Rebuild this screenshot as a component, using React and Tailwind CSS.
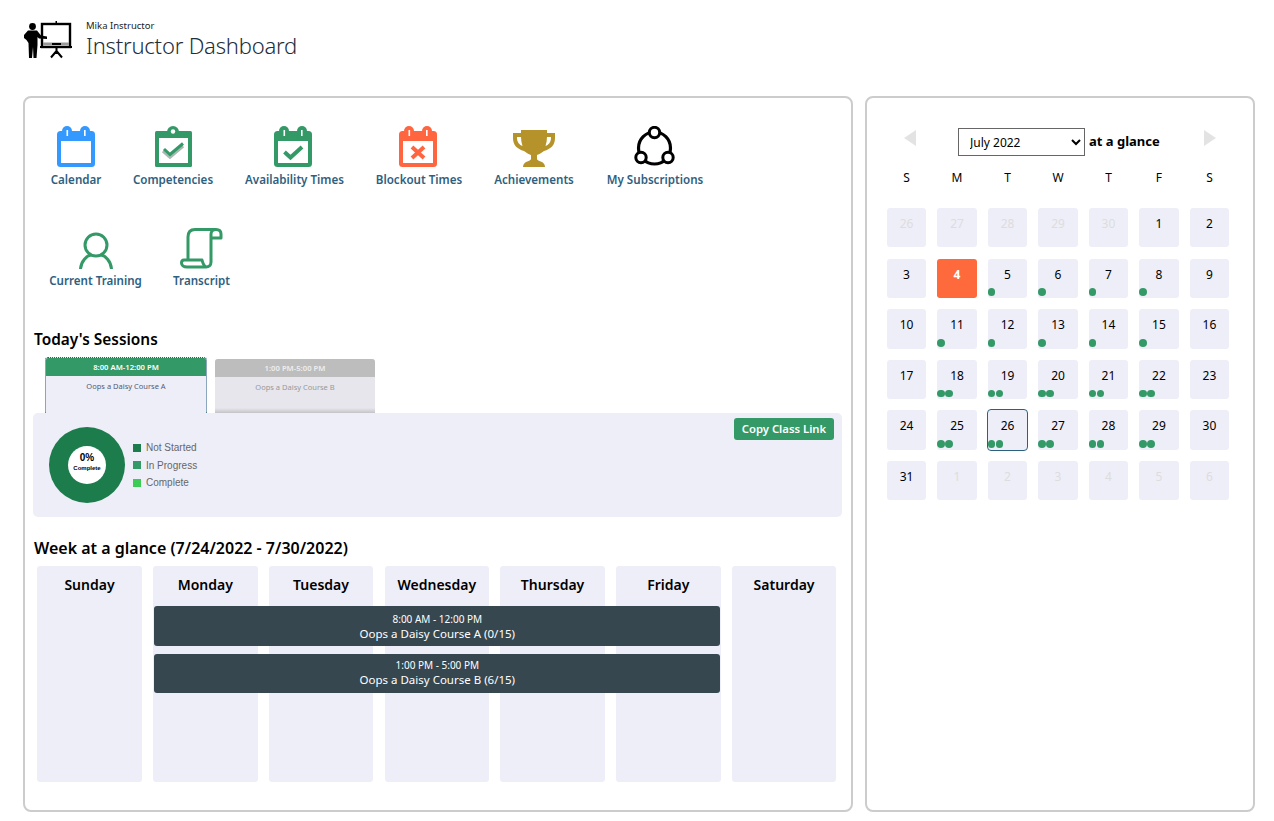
import React from "react";

const G = "#339966";
const O = "#ff6640";
const B = "#3399ff";

function Cal({ color, children, cls }) {
  return (
    <svg width="38" height="41" viewBox="0 0 38 41" className={cls}>
      <rect x="0" y="5" width="38" height="36" rx="3.5" fill={color} />
      <rect x="5" y="0" width="10" height="12" rx="5" fill={color} />
      <rect x="23" y="0" width="10" height="12" rx="5" fill={color} />
      <rect x="9.5" y="4" width="1.6" height="6" fill="#fff" />
      <rect x="27" y="4" width="1.6" height="6" fill="#fff" />
      <rect x="4" y="15" width="30" height="22" fill="#fff" />
      {children}
    </svg>
  );
}

const CalendarIcon = () => <Cal color={B} />;
const AvailIcon = () => (
  <Cal color={G} cls="mr-[3px]">
    <path d="M10.5 26 L16.5 31.5 L28 21" fill="none" stroke={G} strokeWidth="4" />
  </Cal>
);
const BlockIcon = () => (
  <Cal color={O} cls="mr-[3px]">
    <path d="M13 21 L25 32 M25 21 L13 32" fill="none" stroke={O} strokeWidth="4" />
  </Cal>
);

const ClipIcon = () => (
  <svg width="37" height="41" viewBox="0 0 37 41">
    <rect x="0" y="5" width="37" height="36" rx="1.5" fill={G} />
    <circle cx="18" cy="6" r="6" fill={G} />
    <circle cx="18" cy="5.5" r="2.2" fill="#fff" />
    <rect x="4" y="12" width="29" height="25" fill="#fff" />
    <path d="M8 25 L15 31 L28 20" fill="none" stroke="#a9b8b0" strokeWidth="3.5" />
    <path d="M9 23 L15 28.5 L28 17.5" fill="none" stroke={G} strokeWidth="3" />
  </svg>
);

const TrophyIcon = () => (
  <svg width="42" height="37" viewBox="0 0 42 37">
    <path
      d="M8 0 H34 V3 H42 V8 C42 15 38 19 31 21 C28 23.5 25.5 24.5 24 25 V29 C24 30 26 31 29 32 C31 33 32 35 32 37 H10 C10 35 11 33 13 32 C16 31 18 30 18 29 V25 C16.5 24.5 14 23.5 11 21 C4 19 0 15 0 8 V3 H8 Z M4 7 V8 C4 12 6.5 15 9.5 16 C8.5 13 8 10 8 7 Z M38 7 H34 C34 10 33.5 13 32.5 16 C35.5 15 38 12 38 8 Z"
      fill="#b5932a"
      fillRule="evenodd"
    />
  </svg>
);

const SubsIcon = () => (
  <svg width="41" height="41" viewBox="0 0 41 41" className="mr-[2px]">
    <circle cx="20.5" cy="22" r="16" fill="none" stroke="#000" strokeWidth="3.2" />
    <circle cx="20.5" cy="6.5" r="5.2" fill="#fff" stroke="#000" strokeWidth="3" />
    <circle cx="7" cy="31.5" r="5.2" fill="#fff" stroke="#000" strokeWidth="3" />
    <circle cx="34" cy="31.5" r="5.2" fill="#fff" stroke="#000" strokeWidth="3" />
  </svg>
);

const PersonIcon = () => (
  <svg width="34" height="37" viewBox="0 0 34 37">
    <circle cx="17" cy="13" r="11" fill="none" stroke={G} strokeWidth="3" />
    <path d="M1.5 37 C2 29 8 23.5 12 23 M32.5 37 C32 29 26 23.5 22 23" fill="none" stroke={G} strokeWidth="3" />
  </svg>
);

const ScrollIcon = () => (
  <svg width="43" height="41" viewBox="0 0 43 41">
    <path
      d="M8 31 V9 C8 4 10 1.5 15 1.5 H36 C39.5 1.5 41 3.5 41 6 V10 H31 M31 10 V6 C31 3.5 33 1.5 36 1.5 M31 10 V34 C31 37 29 39 26 39 H7 C3.5 39 1.5 37 1.5 35 C1.5 33 2.5 32 4 32 H22 C23 36 24 38 26 39"
      fill="none"
      stroke={G}
      strokeWidth="3"
      strokeLinejoin="round"
    />
  </svg>
);

const Logo = () => (
  <svg width="50" height="40" viewBox="0 0 50 40" className="mt-[1px]">
    <rect x="19" y="5" width="28" height="23" fill="#fff" stroke="#000" strokeWidth="2.4" />
    <rect x="32.5" y="2" width="1.5" height="3" fill="#000" />
    <rect x="20" y="23.5" width="26" height="3" fill="#999" />
    <rect x="29" y="24" width="9" height="2" fill="#000" />
    <rect x="17" y="27" width="32" height="2" fill="#000" />
    <path d="M33.5 29 V35 M33.5 32 L28 38.5 M33.5 32 L39 38.5" fill="none" stroke="#000" strokeWidth="2" />
    <circle cx="9.5" cy="7.5" r="3.4" fill="#000" />
    <path d="M5 11.5 H14 L18 16.5 L24 17.5 V20 L16 19.5 L14.5 18 V26 L13.5 39 H10.5 L10 28 L9 39 H6 L5.5 24 L3.5 21 L1 19 V16 Z" fill="#000" />
  </svg>
);

const items1 = [
  ["Calendar", 50, <CalendarIcon />],
  ["Competencies", 79, <ClipIcon />],
  ["Availability Times", 99, <AvailIcon />],
  ["Blockout Times", 85, <BlockIcon />],
  ["Achievements", 80, <TrophyIcon />],
  ["My Subscriptions", 97, <SubsIcon />],
];
const items2 = [
  ["Current Training", 91, <PersonIcon />],
  ["Transcript", 55, <ScrollIcon />],
];

function IconItem({ label, w, icon, mt }) {
  return (
    <div className="flex flex-col items-center" style={{ width: w }}>
      <div className="h-[41px] flex items-end">{icon}</div>
      <div className={`${mt} h-[16px] leading-[16px] text-[11.6px] font-semibold text-[#2f5f80] whitespace-nowrap`}>{label}</div>
    </div>
  );
}

const cal = [
  [26, 0, 1], [27, 0, 1], [28, 0, 1], [29, 0, 1], [30, 0, 1], [1, 0], [2, 0],
  [3, 0], [4, 0, 0, "today"], [5, 1], [6, 1], [7, 1], [8, 1], [9, 0],
  [10, 0], [11, 1], [12, 1], [13, 1], [14, 1], [15, 1], [16, 0],
  [17, 0], [18, 2], [19, 2], [20, 2], [21, 2], [22, 2], [23, 0],
  [24, 0], [25, 2], [26, 2, 0, "sel"], [27, 2], [28, 2], [29, 2], [30, 0],
  [31, 0], [1, 0, 1], [2, 0, 1], [3, 0, 1], [4, 0, 1], [5, 0, 1], [6, 0, 1],
];

function Day({ d }) {
  const [n, dots, off, kind] = d;
  const bg = kind === "today" ? "bg-[#ff6a3d] text-white font-bold" : off ? "bg-[#eeeef8] text-[#dddddd]" : "bg-[#eeeef8] text-black";
  const ring = kind === "sel" ? "outline outline-1 outline-[#2a6080]" : "";
  return (
    <div className={`${bg} ${ring} rounded-[3px] flex flex-col`}>
      <div className="text-center text-[12px] leading-[16px] pt-[8px]">{n}</div>
      <div className="mt-auto flex gap-[0.5px] pb-[2px]">
        {Array.from({ length: dots }).map((_, i) => (
          <span key={i} className="w-[7.5px] h-[7.5px] rounded-full bg-[#339966]" />
        ))}
      </div>
    </div>
  );
}

function Legend({ color, label }) {
  return (
    <div className="flex items-center gap-[5px] h-[17.5px]">
      <span className="w-[8px] h-[8px]" style={{ background: color }} />
      <span className="text-[10px] text-[#666] font-['Liberation_Sans',sans-serif]">{label}</span>
    </div>
  );
}

export default function App() {
  const days = ["Sunday", "Monday", "Tuesday", "Wednesday", "Thursday", "Friday", "Saturday"];
  return (
    <div className="w-[1274px] h-[821px] bg-white text-black font-['Noto_Sans',sans-serif] overflow-hidden pl-[23px] pr-[19px]">
      <header className="h-[96px] flex items-start pt-[18px]">
        <Logo />
        <div className="ml-[13px] pt-[1px]">
          <div className="text-[9.5px] leading-[13px] text-[#222]">Mika Instructor</div>
          <h1 className="text-[22px] leading-[26px] font-light tracking-[-0.2px] text-[#222e3a]">Instructor Dashboard</h1>
        </div>
      </header>
      <div className="flex gap-[12px] h-[716px]">
        <section className="w-[830px] border-2 border-[#cccccc] rounded-[8px] px-[8px] pt-[28px]">
          <div className="flex gap-[32.5px] pl-[18px]">
            {items1.map(([l, w, i]) => <IconItem key={l} label={l} w={w} icon={i} mt="mt-[5px]" />)}
          </div>
          <div className="flex gap-[33px] pl-[17px] mt-[40px]">
            {items2.map(([l, w, i]) => <IconItem key={l} label={l} w={w} icon={i} mt="mt-[4px]" />)}
          </div>
          <h2 className="mt-[41px] ml-[1px] text-[15.4px] leading-[20px] font-semibold">Today's Sessions</h2>
          <div className="flex items-end pl-[12px] gap-[8px] h-[63px]">
            <div className="w-[162px] h-[56px] border border-dotted border-[#2a6080] border-b-0 rounded-t-[3px] bg-[#eeeef8] text-center">
              <div className="h-[18px] bg-[#339966] text-white text-[7.7px] font-semibold leading-[18px] rounded-t-[2px]">8:00 AM-12:00 PM</div>
              <div className="text-[7.5px] leading-[20px] text-[#555a70]">Oops a Daisy Course A</div>
            </div>
            <div className="w-[160px] h-[54px] rounded-t-[3px] bg-[#e6e6ec] text-center flex flex-col">
              <div className="h-[18px] bg-[#bdbdbd] text-[#eeeeee] text-[7.7px] font-semibold leading-[18px] rounded-t-[3px]">1:00 PM-5:00 PM</div>
              <div className="text-[7.5px] leading-[20px] text-[#999]">Oops a Daisy Course B</div>
              <div className="mt-auto h-[5px] bg-gradient-to-b from-[#e6e6ec] to-[#c4c4c8]" />
            </div>
          </div>
          <div className="relative h-[104px] w-[809px] rounded-[5px] bg-[#eeeef8] flex items-center pl-[16px]">
            <div className="w-[76px] h-[76px] rounded-full bg-[#1c7c4c] flex items-center justify-center">
              <div className="w-[38px] h-[38px] rounded-full bg-white flex flex-col items-center justify-center pb-[7px] font-['Liberation_Sans',sans-serif] font-bold">
                <span className="text-[10px] leading-[12px]">0%</span>
                <span className="text-[6px] leading-[8px]">Complete</span>
              </div>
            </div>
            <div className="ml-[8px]">
              <Legend color="#1c7c4c" label="Not Started" />
              <Legend color="#339966" label="In Progress" />
              <Legend color="#3ccc55" label="Complete" />
            </div>
            <button className="absolute right-[8px] top-[5px] w-[100px] h-[22px] rounded-[3px] bg-[#339966] text-white text-[11.3px] font-semibold leading-[22px] text-center">Copy Class Link</button>
          </div>
          <h2 className="mt-[21px] ml-[1px] text-[16px] leading-[20px] font-semibold">Week at a glance (7/24/2022 - 7/30/2022)</h2>
          <div className="relative mt-[8px] ml-[4.3px] w-[799px] h-[216px] grid grid-cols-7 gap-x-[11.3px]">
            {days.map((d) => (
              <div key={d} className="bg-[#eeeef8] rounded-[3px] text-center text-[14px] font-semibold leading-[20px] pt-[9px]">{d}</div>
            ))}
            <div className="absolute left-[117px] top-[40px] w-[566px] flex flex-col gap-[8px]">
              <div className="h-[40px] rounded-[3px] bg-[#37474f] text-white text-center flex flex-col justify-center pt-[1px]">
                <div className="text-[10px] leading-[14px]">8:00 AM - 12:00 PM</div>
                <div className="text-[11.5px] leading-[16px]">Oops a Daisy Course A (0/15)</div>
              </div>
              <div className="h-[39px] rounded-[3px] bg-[#37474f] text-white text-center flex flex-col justify-center pb-[2px]">
                <div className="text-[10px] leading-[14px]">1:00 PM - 5:00 PM</div>
                <div className="text-[11.5px] leading-[16px]">Oops a Daisy Course B (6/15)</div>
              </div>
            </div>
          </div>
        </section>
        <aside className="w-[390px] border-2 border-[#cccccc] rounded-[8px] pl-[20px] pr-[24px] pt-[30px]">
          <div className="flex items-center h-[28px] pl-[17px]">
            <div className="w-0 h-0 border-y-[8px] border-y-transparent border-r-[12px] border-r-[#e3e3e3] mt-[-8px]" />
            <select defaultValue="July 2022" className="ml-[42px] w-[127px] h-[28px] border border-[#666] bg-white text-[12px] pl-[7px] text-black">
              <option>July 2022</option>
            </select>
            <span className="ml-[4px] text-[13px] font-bold whitespace-nowrap">at a glance</span>
            <div className="ml-[44px] w-0 h-0 border-y-[8px] border-y-transparent border-l-[12px] border-l-[#e3e3e3] mt-[-8px]" />
          </div>
          <div className="grid grid-cols-7 gap-x-[11.4px] mt-[14px] text-center text-[12px] leading-[16px] w-[342px]">
            {["S", "M", "T", "W", "T", "F", "S"].map((d, i) => <div key={i}>{d}</div>)}
          </div>
          <div className="grid grid-cols-7 gap-x-[11.4px] gap-y-[11.2px] auto-rows-[39.4px] mt-[22px] w-[342px]">
            {cal.map((d, i) => <Day key={i} d={d} />)}
          </div>
        </aside>
      </div>
    </div>
  );
}
